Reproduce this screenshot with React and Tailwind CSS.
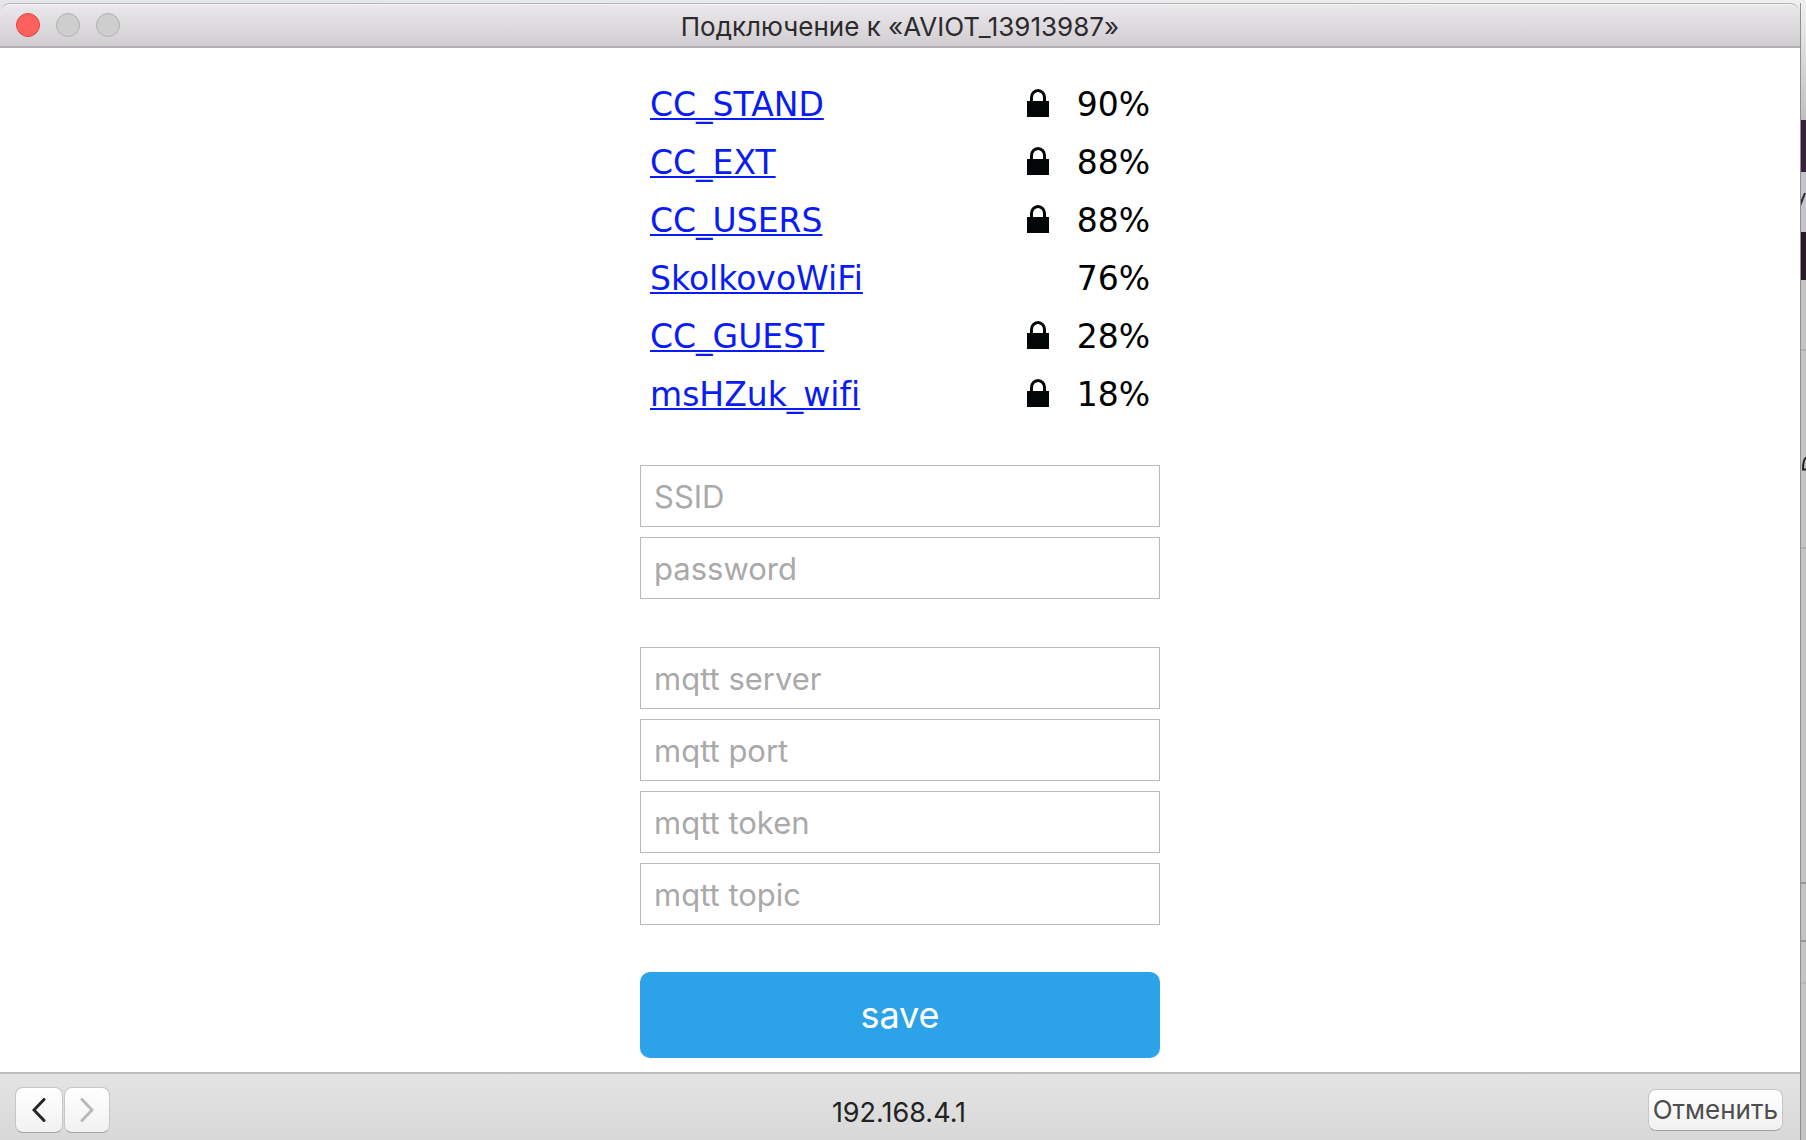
import React from "react";

const networks = [
  { name: "CC_STAND", locked: true, quality: 90 },
  { name: "CC_EXT", locked: true, quality: 88 },
  { name: "CC_USERS", locked: true, quality: 88 },
  { name: "SkolkovoWiFi", locked: false, quality: 76 },
  { name: "CC_GUEST", locked: true, quality: 28 },
  { name: "msHZuk_wifi", locked: true, quality: 18 },
];

function LockIcon() {
  return (
    <svg role="img" aria-label="secured" width="22" height="28" viewBox="0 0 22 28" className="mb-1 block">
      <path d="M4.500 13V8.500a6.500 7 0 0 1 13 0V13" fill="none" stroke="#020606" strokeWidth="3" />
      <rect x="0" y="12" width="22" height="16" fill="#020606" />
    </svg>
  );
}

function Field({ label, type = "text" }) {
  return (
    <input
      type={type}
      aria-label={label}
      placeholder={label}
      className="block h-[62px] w-full border border-[#b9b9b9] bg-white px-[13px] text-[31px] text-black placeholder:text-[#a9a9a9]"
    />
  );
}

function TitleBar() {
  return (
    <header className="grid h-[45px] grid-cols-[1fr_auto_1fr] items-center rounded-t-[10px] border-t border-b-2 border-t-[#b4b4b8] border-b-[#b3b0b3] bg-linear-to-b from-[#ebe9eb] to-[#d1ced1] px-4 inset-shadow-[0_1px_0_#f6f5f6]">
      <div className="flex gap-4">
        <button aria-label="Close" className="size-6 rounded-full border border-[#e2463f] bg-[#fc615d]" />
        <button aria-label="Minimize" disabled className="size-6 rounded-full border border-[#b0b0b0] bg-[#cecece]" />
        <button aria-label="Zoom" disabled className="size-6 rounded-full border border-[#b0b0b0] bg-[#cecece]" />
      </div>
      <h1 className="pt-[3px] text-[26px] leading-8 text-[#2d2a2d]">Подключение к «AVIOT_13913987»</h1>
    </header>
  );
}

function BottomBar() {
  const button = "rounded-lg border border-[#c6c6c6] border-b-[#a3a3a3] bg-linear-to-b from-white to-[#f1f1f1]";
  return (
    <footer className="grid h-[68px] grid-cols-[1fr_auto_1fr] items-center border-t-2 border-[#bdbdbd] bg-linear-to-b from-[#e4e4e4] to-[#d8d8d8] pr-[17px] pl-[15px]">
      <nav className="flex gap-px pt-[6px]">
        <button aria-label="Back" className={`flex h-[46px] w-12 items-center justify-center ${button}`}>
          <svg width="14" height="24" viewBox="0 0 14 24" fill="none" stroke="#262626" strokeWidth="3" strokeLinecap="round">
            <path d="M12 1.500 2 12l10 10.500" />
          </svg>
        </button>
        <button aria-label="Forward" disabled className={`flex h-[46px] w-[46px] items-center justify-center ${button}`}>
          <svg width="14" height="24" viewBox="0 0 14 24" fill="none" stroke="#b9b9b9" strokeWidth="3" strokeLinecap="round">
            <path d="m2 1.500 10 10.500-10 10.500" />
          </svg>
        </button>
      </nav>
      <p className="pt-3 text-[27px] leading-8 text-[#222]">192.168.4.1</p>
      <button className={`mt-[6px] h-[42px] justify-self-end px-1 text-[26px] leading-8 text-[#4d4d4d] ${button}`}>Отменить</button>
    </footer>
  );
}

function Backdrop() {
  return (
    <div aria-hidden="true" className="flex w-[6px] shrink-0 flex-col overflow-hidden border-l border-[#8f8f8f] bg-[#c3c3c3]">
      <div className="h-[117px] bg-linear-to-b from-[#f0f0f0] to-[#c0c0c0]" />
      <div className="h-[52px] bg-[#37203a]" />
      <div className="h-[60px] bg-[#c4c3c9] pt-[21px]">
        <svg width="5" height="14" viewBox="0 0 5 14">
          <path d="M0 7 3 0h2L0 13z" fill="#2b2b2d" />
        </svg>
      </div>
      <div className="h-[48px] bg-[#2a1826]" />
      <div className="h-[71px] border-b-2 border-[#b0b0b0]" />
      <div className="h-[198px] border-b-2 border-[#b0b0b0] pt-[105px]">
        <svg width="5" height="15" viewBox="0 0 5 15">
          <path d="M5 1.500C3 3 2 7 2 13.500h3" fill="none" stroke="#252525" strokeWidth="2" />
        </svg>
      </div>
      <div className="h-[335px] border-b-2 border-[#989898]" />
      <div className="h-[58px] border-b-2 border-[#989898]" />
      <div className="h-[42px] border-b-2 border-[#b4b4b4]" />
    </div>
  );
}

export default function App() {
  return (
    <div className="flex min-h-screen bg-linear-to-r from-[#e4e6e8] to-[#efefef] pt-[3px] font-['Inter',sans-serif]">
      <div className="flex flex-1 flex-col">
        <TitleBar />
        <main className="flex-1 bg-white px-4 pt-7 pb-[14px]">
          <form className="mx-auto w-full max-w-[520px]" onSubmit={(e) => e.preventDefault()}>
            <table className="w-full font-['DejaVu_Sans',sans-serif] text-[33px] leading-10 text-black [font-variant-ligatures:none]">
              <tbody>
                {networks.map((n) => (
                  <tr key={n.name} className="h-[58px]">
                    <td className="pl-[10px]">
                      <a href="#ssid" className="text-[#0a1cf5] underline decoration-2 underline-offset-2">{n.name}</a>
                    </td>
                    <td className="w-12">{n.locked && <LockIcon />}</td>
                    <td className="w-[85px] pr-[10px] text-right">{n.quality}%</td>
                  </tr>
                ))}
              </tbody>
            </table>
            <div className="mt-[41px] flex flex-col gap-[10px]">
              <Field label="SSID" />
              <Field label="password" type="password" />
            </div>
            <div className="mt-12 flex flex-col gap-[10px]">
              <Field label="mqtt server" />
              <Field label="mqtt port" />
              <Field label="mqtt token" />
              <Field label="mqtt topic" />
            </div>
            <button type="submit" className="mt-[47px] h-[86px] w-full rounded-[10px] bg-[#2ca2e9] text-[36px] text-white">
              save
            </button>
          </form>
        </main>
        <BottomBar />
      </div>
      <Backdrop />
    </div>
  );
}
